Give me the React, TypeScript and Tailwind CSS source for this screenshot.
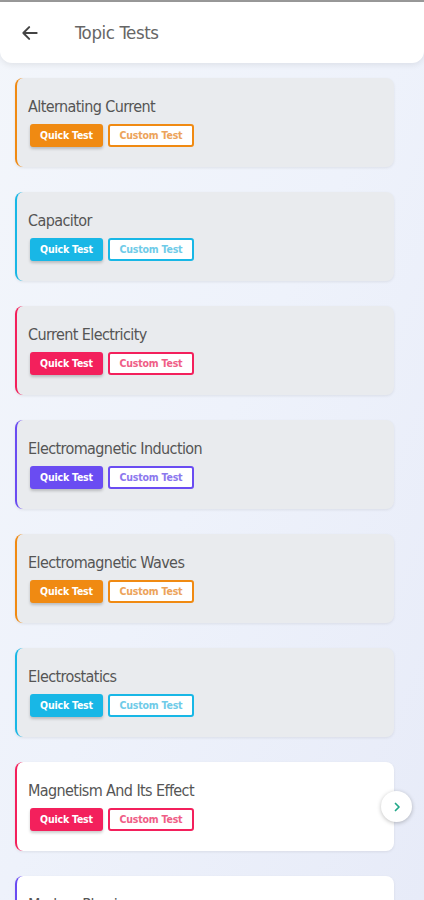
import React from "react";

type Topic = { name: string; color: "orange" | "cyan" | "pink" | "purple"; active?: boolean };

const topics: Topic[] = [
  { name: "Alternating Current", color: "orange" },
  { name: "Capacitor", color: "cyan" },
  { name: "Current Electricity", color: "pink" },
  { name: "Electromagnetic Induction", color: "purple" },
  { name: "Electromagnetic Waves", color: "orange" },
  { name: "Electrostatics", color: "cyan" },
  { name: "Magnetism And Its Effect", color: "pink", active: true },
  { name: "Modern Physics", color: "purple", active: true },
];

const styles = {
  orange: {
    border: "border-l-[#f08a12]",
    fill: "bg-[#f08a12]",
    outline: "border-[#f08a12] text-[#eca35a]",
  },
  cyan: {
    border: "border-l-[#18b7e6]",
    fill: "bg-[#18b7e6]",
    outline: "border-[#18b7e6] text-[#6fcbe8]",
  },
  pink: {
    border: "border-l-[#f3205c]",
    fill: "bg-[#f3205c]",
    outline: "border-[#f3205c] text-[#ef5d86]",
  },
  purple: {
    border: "border-l-[#6a4cf2]",
    fill: "bg-[#6a4cf2]",
    outline: "border-[#6a4cf2] text-[#8c78ee]",
  },
};

function TopicCard({ topic }: { topic: Topic }) {
  const s = styles[topic.color];
  return (
    <div
      className={`relative h-[89px] rounded-lg border-l-2 ${s.border} ${
        topic.active ? "bg-white" : "bg-[#e9ebee]"
      } shadow-[0_1px_3px_rgba(0,0,0,0.08)] pl-[11px] pt-[17px]`}
    >
      <div className="text-[16px] leading-[24px] text-[#555] tracking-[-0.6px]">{topic.name}</div>
      <div className="mt-[5px] flex gap-[5px] pl-[2px]">
        <button
          className={`w-[73px] h-[23px] rounded-[3px] ${s.fill} text-white text-[10.5px] font-semibold tracking-[-0.2px] shadow-[0_2px_3px_rgba(0,0,0,0.2)]`}
        >
          Quick Test
        </button>
        <button
          className={`w-[86px] h-[23px] rounded-[3px] border-2 ${s.outline} bg-white text-[10.5px] font-semibold tracking-[-0.2px]`}
        >
          Custom Test
        </button>
      </div>
      {topic.name === "Magnetism And Its Effect" && (
        <div className="absolute right-[-18px] top-[29px] w-[31px] h-[31px] rounded-full bg-white shadow-[0_1px_4px_rgba(0,0,0,0.25)] flex items-center justify-center">
          <svg width="12" height="12" viewBox="0 0 24 24" fill="none" stroke="#22a889" strokeWidth="3.5" strokeLinecap="round" strokeLinejoin="round">
            <path d="M9 5l7 7-7 7" />
          </svg>
        </div>
      )}
    </div>
  );
}

export default function App() {
  return (
    <div
      className="w-[424px] h-[900px] overflow-hidden bg-gradient-to-br from-[#f3f6fb] via-[#eef2fb] to-[#e7ebf8]"
      style={{ fontFamily: '"DejaVu Sans Condensed", "Liberation Sans Narrow", sans-serif' }}
    >
      <div className="h-[2px] bg-[#9a9a9a]" />
      <header className="h-[61px] bg-white rounded-b-xl shadow-[0_2px_6px_rgba(0,0,0,0.08)] flex items-center">
        <svg className="ml-[20px]" width="20" height="20" viewBox="0 0 24 24" fill="none" stroke="#444" strokeWidth="2.4" strokeLinecap="round" strokeLinejoin="round">
          <path d="M20 12H4M11 5l-7 7 7 7" />
        </svg>
        <h1 className="ml-[35px] text-[18.5px] text-[#666] tracking-[-0.4px]">Topic Tests</h1>
      </header>
      <div className="flex flex-col gap-[25px] pl-[15px] pr-[30px] pt-[15px]">
        {topics.map((t) => (
          <TopicCard key={t.name} topic={t} />
        ))}
      </div>
    </div>
  );
}
